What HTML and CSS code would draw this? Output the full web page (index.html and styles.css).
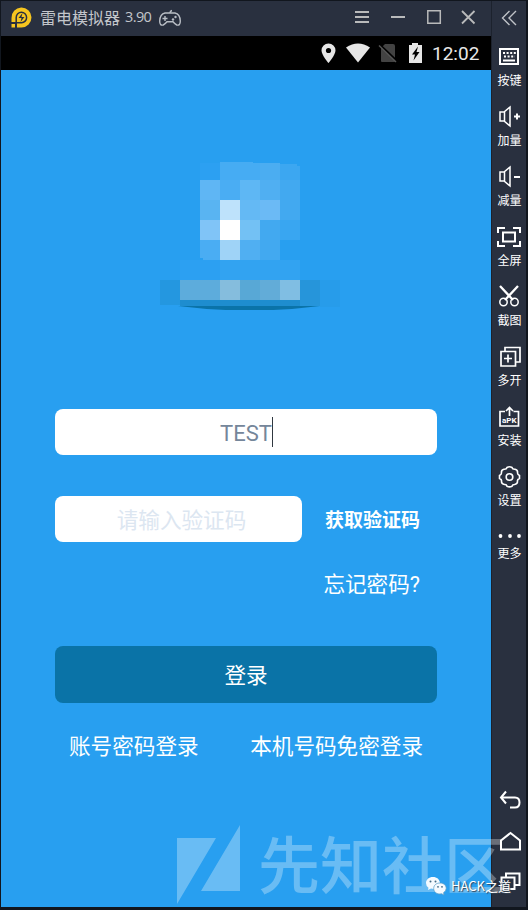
FILE: index.html
```html
<!DOCTYPE html>
<html lang="zh-CN">
<head>
<meta charset="utf-8">
<title>雷电模拟器</title>
<link rel="stylesheet" href="styles.css">
</head>
<body>
<div class="window">
  <div class="main">
    <header class="titlebar">
      <svg class="brand" width="22" height="22" viewBox="0 0 22 22"><path d="M1.500 11a10 10 0 1 1 10 9.500H7v-5H1.500z" fill="#f6c51f"/><path d="M1.500 17H5v3.500H1.500z" fill="#f6c51f"/><path d="M6.200 21V10.500a5.200 5.200 0 1 1 5.300 5.200H1" fill="none" stroke="#29303f" stroke-width="1.500"/><path d="m12.500 6-4 5h3l-1 4 4-5h-3z" fill="#29303f"/></svg>
      <span class="name">雷电模拟器</span><span class="version">3.90</span>
      <svg class="pad" width="24" height="18" viewBox="0 0 24 18"><g fill="none" stroke="#b9bec5" stroke-width="1.400"><path d="M7 4h10q5 1 5.300 8 0 5-3.500 4-2-1-3.800-3.200H9Q7.200 15 5.200 16 1.700 17 1.700 12 2 5 7 4Z"/><path d="M12 4q0-2 2-2.500M4.500 9.500h5M7 7v5"/></g><circle cx="17.500" cy="8" r="1.200" fill="#b9bec5"/><circle cx="15" cy="10.500" r="1.200" fill="#b9bec5"/></svg>
      <svg class="controls" width="124" height="20" viewBox="0 0 124 20" fill="none" stroke="#b9babb" stroke-width="2"><path d="M0 4h14M0 9h14M0 14h14M36 9h14"/><path d="M72.800 2.800h12.500v12.500H72.800z" stroke-width="1.500"/><path d="m107 3 12.500 12.500m0-12.500L107 15.500" stroke-width="1.800"/></svg>
    </header>
    <div class="statusbar">
      <svg width="104" height="22" viewBox="0 0 104 22"><path d="M8.500 1.500a7 7 0 0 0-7 7C1.500 13 8.500 21 8.500 21s7-8 7-12.500a7 7 0 0 0-7-7z" fill="#e6e6e6"/><circle cx="8.500" cy="8.500" r="2.600"/><path d="M26 5.500q12-8 24 0L38 20.500z" fill="#e6e6e6"/><path d="M65 2h8q2 0 2 2v15q0 1-1 1H62q-1 0-1-1V6z" fill="#434343"/><path d="m58 1 19 18" stroke="#000" stroke-width="2"/><path d="m59 3.500 17 16.500" stroke="#555" stroke-width="1.500"/><path d="M89 3h3V1h6v2h4v18H89z" fill="#e6e6e6"/><path d="m98 4.500-6 8h3l-1.500 6 6-8.500h-3z"/></svg>
      <span class="clock">12:02</span>
    </div>
    <main class="screen">
      <svg class="mosaic" width="180" height="150" viewBox="0 0 180 150" shape-rendering="crispEdges">
        <path d="M18 146Q90 155 160 146z" fill="#0a73a8" shape-rendering="auto"/>
        <path d="M40 3h20v17H40z" fill="#2ca0f2"/><path d="M60 2h33v1h27v17H60z" fill="#46acf3"/><path d="M100 3h20v17h-20z" fill="#4badf1"/><path d="M120 4h17v2h3v14h-20z" fill="#3ca7f1"/>
        <path d="M40 20h20v20H40z" fill="#5fb6f4"/><path d="M60 20h20v20H60z" fill="#4aadf3"/><path d="M80 20h20v20H80z" fill="#5eb7f4"/><path d="M100 20h20v20h-20z" fill="#50aff2"/><path d="M120 20h20v40h-20z" fill="#42a9f0"/>
        <path d="M40 40h20v20H40z" fill="#59b4f2"/><path d="M60 40h20v20H60z" fill="#bee2fb"/><path d="M80 40h20v20H80z" fill="#64b9f4"/><path d="M100 40h20v20h-20z" fill="#6bbaf5"/>
        <path d="M40 60h20v20H40z" fill="#80c4f7"/><path d="M60 60h20v20H60z" fill="#fff"/><path d="M80 60h20v20H80z" fill="#73c1f4"/><path d="M100 60h20v40h-20z" fill="#42a9f0"/><path d="M120 60h20v20h-20z" fill="#39a6f1"/>
        <path d="M40 80h20v20H43v-2h-3z" fill="#4aadf3"/><path d="M60 80h20v20H60z" fill="#9fd3f7"/><path d="M80 80h20v20H80z" fill="#50aff2"/>
        <path d="M20 100h40v20H20z" fill="#2ca0f2"/><path d="M60 100h80v20H60z" fill="#32a3f1"/>
        <path d="M0 120h20v25H0z" fill="#2497e0"/><path d="M20 120h40v20H20z" fill="#5dacdc"/><path d="M60 120h20v20H60z" fill="#85bddd"/><path d="M80 120h20v20H80z" fill="#58a8d6"/><path d="M100 120h20v20h-20z" fill="#62acd8"/><path d="M120 120h20v20h-20z" fill="#80bee3"/><path d="M140 120h20v26h-20z" fill="#2695da"/><path d="M160 120h20v27h-20z" fill="#279cea"/><path d="M20 140h120v6H20z" fill="#1e8dcf"/>
      </svg>
      <div class="field account"><span>TEST</span><i class="caret"></i></div>
      <div class="code-row">
        <div class="field code">请输入验证码</div>
        <div class="get-code">获取验证码</div>
      </div>
      <div class="forgot">忘记密码?</div>
      <div class="login">登录</div>
      <div class="links"><span>账号密码登录</span><span>本机号码免密登录</span></div>
    </main>
  </div>
  <aside class="sidebar">
    <svg class="collapse" width="24" height="24" viewBox="0 0 24 24"><path d="m11.500 5-7 7 7 7m6.500-14-7 7 7 7" stroke="#bfc2c7" stroke-width="1.400"/></svg>
    <div class="tool"><svg width="24" height="24" viewBox="0 0 24 24"><path d="M3 5h18v15H3z"/><path d="M6 9h13" stroke-dasharray="2 1.600"/><path d="M7 12.500h11" stroke-dasharray="2 1.600"/><path d="M6 16.500h12"/></svg><span>按键</span></div>
    <div class="tool"><svg width="24" height="24" viewBox="0 0 24 24"><path d="M3 8h4l6-5v19l-6-5H3zM7.500 8v9" stroke-width="1.500"/><path d="M17 12.500h6m-3-3v6"/></svg><span>加量</span></div>
    <div class="tool"><svg width="24" height="24" viewBox="0 0 24 24"><path d="M3 8h4l6-5v19l-6-5H3zM7.500 8v9" stroke-width="1.500"/><path d="M17 13h6"/></svg><span>减量</span></div>
    <div class="tool"><svg width="24" height="24" viewBox="0 0 24 24"><path d="M1 9V4h7M16 4h7v5M23 17v5h-7M8 22H1v-5M6 8.500h12v9H6z"/></svg><span>全屏</span></div>
    <div class="tool"><svg width="24" height="24" viewBox="0 0 24 24"><path d="m3 2 13 14M21 2 8 16" stroke-width="2.300"/><circle cx="6.500" cy="18" r="3.700" stroke-width="1.500"/><circle cx="17.500" cy="18" r="3.700" stroke-width="1.500"/></svg><span>截图</span></div>
    <div class="tool"><svg width="24" height="24" viewBox="0 0 24 24"><path d="M4 7.500h14.500V22H4zM8 7V3.500h15V18h-4M7 14.500h8m-4-4v8" stroke-width="1.700"/></svg><span>多开</span></div>
    <div class="tool"><svg width="24" height="24" viewBox="0 0 24 24"><path d="M8 7.500H3V22h18.500V7.500h-5M12.500 12V4M9 7l3.500-3.500L16 7" stroke-width="1.700"/><text x="12.300" y="19">aPK</text></svg><span>安装</span></div>
    <div class="tool"><svg width="24" height="24" viewBox="0 0 24 24"><path d="M10 3.500Q12.500 2 15 3.500 15.500 5.500 18 5.300 21 6 20.500 9q0 1.500 2 2.500v3q-2.500 1-2 3 0 2.500-3 3-2 0-2.500 1.700-2.500 1.300-5 0-.5-2-2.500-1.700-3-.5-3-3 .5-2-2-3v-3q2-1 2-2.500Q4 6 7 5.300 9.500 5.500 10 3.500z" stroke-width="1.600"/><circle cx="12.500" cy="13" r="3.300" stroke-width="1.600"/></svg><span>设置</span></div>
    <div class="tool more"><svg width="24" height="24" viewBox="0 0 24 24"><g fill="#fff" stroke="none"><circle cx="3.500" cy="12" r="1.900"/><circle cx="13" cy="12" r="1.900"/><circle cx="22" cy="12" r="1.900"/></g></svg><span>更多</span></div>
    <nav class="keys">
      <svg width="24" height="24" viewBox="0 0 24 24"><path d="M8 2.500 3 8.500l5 6M3 8.500h14q4.500 0 4.500 5t-4.500 5h-5"/></svg>
      <svg width="24" height="24" viewBox="0 0 24 24"><path d="m12.500 4 9.500 7.500v9H3v-9z"/></svg>
      <svg width="24" height="24" viewBox="0 0 24 24"><path d="M3.500 8.500h13V20h-13zM8 8V4.500h13.500V16H17"/></svg>
    </nav>
  </aside>
</div>
<div class="community">
  <svg width="64" height="80" viewBox="0 0 64 80"><path d="M0 13h39L0 79zM63 0v66H24z" fill="#fff"/></svg>
  <span>先知社区</span>
</div>
<div class="wechat">
  <svg width="22" height="20" viewBox="0 0 22 20"><path d="M8 1C3.800 1 1 3.700 1 7q0 3 2.500 4.800L3 14l3-1.400q5 1 7.500-1.300 1.700-2 1.500-4.500C14.500 3.300 12 1 8 1z" fill="#f4faff"/><path d="M15 7c-3.700 0-6.300 2.200-6.300 5.500S11.500 18 15 18l1.500-.3L19 19l-.4-2.400q2.600-1.600 2.600-4.200C21.200 9.300 18.700 7 15 7z" fill="#f4faff" stroke="#5b9fc9" stroke-width=".8"/><g fill="#416a85"><circle cx="5.500" cy="5.500" r="1"/><circle cx="10.500" cy="5.500" r="1"/><circle cx="13" cy="10.800" r=".9"/><circle cx="17" cy="10.800" r=".9"/></g></svg>
  <span>HACK之道</span>
</div>
</body>
</html>
```

FILE: styles.css
```css
* { box-sizing: border-box; }
body {
  margin: 0;
  width: 528px;
  height: 910px;
  overflow: hidden;
  position: relative;
  background: #11161e;
  font-family: Roboto, "Noto Sans CJK SC", sans-serif;
  color: #fff;
}
svg { display: block; flex: none; }
.window {
  display: flex;
  height: 910px;
  padding: 1px 2px 3px 1px;
  background: #11161e;
}
.main { width: 490px; display: flex; flex-direction: column; }
.titlebar {
  height: 35px;
  display: flex;
  align-items: center;
  padding: 0 0 1px 9px;
  background: #29303f;
  color: #c3c6cb;
  white-space: nowrap;
}
.name { margin-left: 8px; font: 16px/20px "Noto Sans CJK SC", sans-serif; }
.name, .version { margin-top: -2px; }
.version { margin-left: 5px; font: 14.500px/20px "Open Sans", sans-serif; letter-spacing: -.6px; }
.pad { margin: -1px 0 0 7px; }
.controls { margin-left: auto; margin-right: 12px; }
.statusbar {
  height: 34px;
  display: flex;
  align-items: center;
  padding-left: 319px;
  background: #000;
}
.clock { margin: 2px 0 0 8px; font-size: 19px; line-height: 22px; color: #e8e8e8; }
.screen {
  flex: 1;
  display: flex;
  flex-direction: column;
  align-items: flex-start;
  padding: 90px 54px 0;
  background: #289ff0;
  font-size: 21.600px;
  line-height: 30px;
  white-space: nowrap;
}
.mosaic { margin-left: 105px; }
.field {
  height: 46px;
  display: flex;
  align-items: center;
  justify-content: center;
  border-radius: 8px;
  background: #fff;
}
.account { width: 382px; margin-top: 99px; padding-left: 1px; color: #75869a; font-size: 22px; }
.account span { padding-top: 3px; }
.caret { width: 1px; height: 30px; background: #303840; }
.code-row { display: flex; align-items: center; margin-top: 41px; }
.code { width: 247px; padding: 3px 0 0 6px; color: #dce6f1; }
.get-code { margin-left: 23px; padding-top: 3px; font-size: 19px; font-weight: 700; }
.forgot { align-self: flex-end; margin: 28px 17px 0 0; }
.login {
  width: 382px;
  height: 57px;
  margin-top: 46px;
  padding-top: 1px;
  border-radius: 8px;
  background: #0a73a7;
  text-align: center;
  line-height: 58px;
}
.links { width: 382px; display: flex; justify-content: space-between; margin-top: 29px; padding: 0 14px; }
.sidebar {
  width: 35px;
  display: flex;
  flex-direction: column;
  align-items: center;
  padding: 5px 0 4px 1px;
  border-left: 1px solid #1c222d;
  background: #29303f;
}
.sidebar svg { fill: none; stroke: #fff; stroke-width: 2; }
.collapse { margin-bottom: 14px; }
.tool {
  height: 60px;
  display: flex;
  flex-direction: column;
  align-items: center;
  font: 12px/16px "Noto Sans CJK SC", sans-serif;
}
.tool span { margin-top: 4px; white-space: nowrap; }
.tool text { fill: #fff; stroke: none; font: 700 8px Roboto, sans-serif; text-anchor: middle; }
.more span { margin-top: -3px; }
.keys { display: flex; flex-direction: column; gap: 16px; margin-top: auto; padding-bottom: 10px; }
.community {
  position: absolute;
  left: 177px;
  top: 825px;
  display: flex;
  opacity: .3;
}
.community span {
  margin: -9px 0 0 17px;
  font: 500 62px/92px "Noto Sans CJK SC", sans-serif;
  white-space: nowrap;
}
.wechat {
  position: absolute;
  left: 425px;
  top: 876px;
  display: flex;
  align-items: center;
}
.wechat span {
  margin-left: 4px;
  font: 13px/20px "Noto Sans CJK SC", sans-serif;
  text-shadow: 1px 1px 1px #345;
  white-space: nowrap;
}
```
